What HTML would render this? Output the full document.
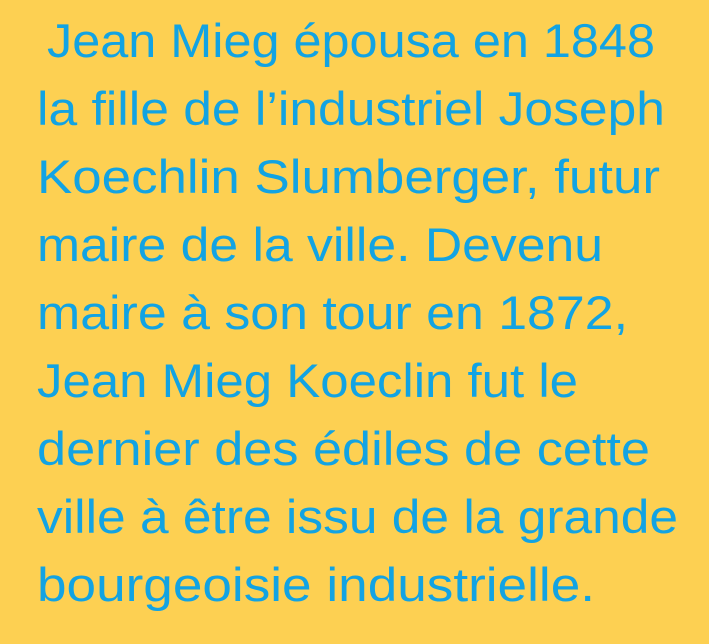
<!DOCTYPE html>
<html><head><meta charset="utf-8"><style>
html,body{margin:0;padding:0;background:#FDD052;}
svg{display:block}
text{font-family:"Liberation Sans",sans-serif;font-size:47px;fill:#12A3E3;}
</style></head><body>
<svg width="709" height="644" viewBox="0 0 709 644">
<rect width="709" height="644" fill="#FDD052"/>
<text x="47" y="57" textLength="608" lengthAdjust="spacingAndGlyphs">Jean Mieg épousa en 1848</text>
<text x="37" y="125" textLength="628" lengthAdjust="spacingAndGlyphs">la fille de l’industriel Joseph</text>
<text x="37" y="193" textLength="623" lengthAdjust="spacingAndGlyphs">Koechlin Slumberger, futur</text>
<text x="37" y="261" textLength="566" lengthAdjust="spacingAndGlyphs">maire de la ville. Devenu</text>
<text x="37" y="329" textLength="591" lengthAdjust="spacingAndGlyphs">maire à son tour en 1872,</text>
<text x="37" y="397" textLength="541" lengthAdjust="spacingAndGlyphs">Jean Mieg Koeclin fut le</text>
<text x="37" y="465" textLength="613" lengthAdjust="spacingAndGlyphs">dernier des édiles de cette</text>
<text x="37" y="533" textLength="641" lengthAdjust="spacingAndGlyphs">ville à être issu de la grande</text>
<text x="37" y="601" textLength="558" lengthAdjust="spacingAndGlyphs">bourgeoisie industrielle.</text>
</svg>
</body></html>
